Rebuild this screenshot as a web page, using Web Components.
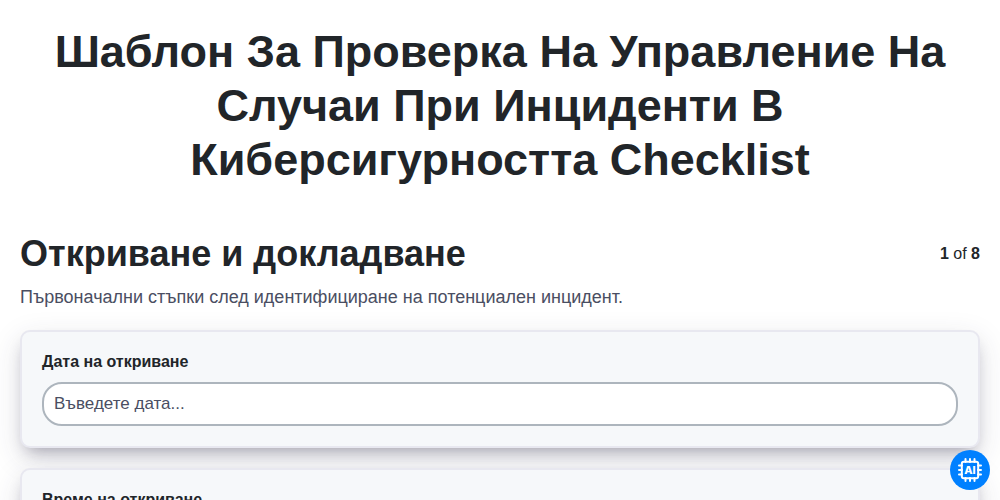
<!DOCTYPE html>
<html lang="bg">

<head>
  <meta charset="UTF-8">
  <meta name="viewport" content="width=device-width, initial-scale=1.0">
  <title>Checklist</title>
  <style>
    :root {
      --text-color: #212529;
      --muted-color: #4a4e62;
      --card-color: #f6f8fa;
      --card-border: #e8e8f0;
      --accent-color: #0080ff;
    }

    body {
      margin: 0;
      height: 500px;
      overflow: hidden;
      background: #fff;
      color: var(--text-color);
      font: 16px/1.5 "Liberation Sans", Arial, sans-serif;
    }
  </style>
</head>

<body>
  <checklist-page>
    <span slot="title">Шаблон За Проверка На Управление На Случаи При Инциденти В Киберсигурността Checklist</span>
    <checklist-section current="1" total="8">
      <span slot="heading">Откриване и докладване</span>
      <span slot="description">Първоначални стъпки след идентифициране на потенциален инцидент.</span>
      <checklist-field label="Дата на откриване" placeholder="Въведете дата..."></checklist-field>
      <checklist-field label="Време на откриване" placeholder=""></checklist-field>
    </checklist-section>
  </checklist-page>
  <ai-button></ai-button>

  <template id="page">
    <style>
      :host {
        display: block;
        padding: 25px 20px;
      }

      h1 {
        margin: 0 0 40px;
        font-size: 45px;
        line-height: 54px;
        text-align: center;
      }
    </style>
    <h1><slot name="title"></slot></h1>
    <slot></slot>
  </template>

  <template id="section">
    <style>
      :host {
        display: block;
      }

      header {
        display: flex;
        align-items: center;
        justify-content: space-between;
      }

      h2 {
        margin: 0;
        font-size: 36px;
        line-height: 54px;
      }

      p {
        margin: 3px 0 19px;
        font-size: 18px;
        line-height: 27px;
        color: var(--muted-color);
      }

      .fields {
        display: flex;
        flex-direction: column;
        gap: 20px;
      }
    </style>
    <header>
      <h2><slot name="heading"></slot></h2>
      <div><b class="current"></b> of <b class="total"></b></div>
    </header>
    <p><slot name="description"></slot></p>
    <div class="fields"><slot></slot></div>
  </template>

  <template id="field">
    <style>
      :host {
        display: block;
        box-sizing: border-box;
        height: 118px;
        padding: 18px 20px 20px;
        border: 2px solid var(--card-border);
        border-radius: 10px;
        background: var(--card-color);
        box-shadow: rgba(50, 50, 80, .15) 0 10px 30px 0, rgba(20, 15, 45, .34) 0 9px 16px -7px;
      }

      label {
        display: block;
        margin-bottom: 8px;
        font-weight: bold;
      }

      input {
        display: block;
        box-sizing: border-box;
        width: 100%;
        height: 44px;
        padding: 0 10px;
        border: 2px solid #adb5bd;
        border-radius: 20px;
        background: #fff;
        font: 17px "Liberation Sans", Arial, sans-serif;
      }

      input::placeholder {
        color: var(--muted-color);
      }
    </style>
    <label for="value"></label>
    <input id="value" type="text">
  </template>

  <template id="ai">
    <style>
      :host {
        position: fixed;
        right: 10px;
        bottom: 10px;
      }

      button {
        display: flex;
        align-items: center;
        justify-content: center;
        width: 40px;
        height: 40px;
        padding: 0;
        border: none;
        border-radius: 50%;
        background: var(--accent-color);
        color: #fff;
      }
    </style>
    <button aria-label="AI">
      <svg width="24" height="24" viewBox="0 0 24 24" fill="none" stroke="currentColor" stroke-width="2" stroke-linecap="round">
        <rect x="3.8" y="3.8" width="16.4" height="16.4" rx="2"/>
        <path d="M7.5 4V1M12 4V1M16.5 4V1M7.5 20v3M12 20v3M16.5 20v3M4 7.5H1M4 12H1M4 16.5H1M20 7.5h3M20 12h3M20 16.5h3"/>
        <text x="6.3" y="15.7" font-family="Inter, sans-serif" font-size="10" font-weight="800" textLength="11.4" lengthAdjust="spacingAndGlyphs" fill="currentColor" stroke="none">AI</text>
      </svg>
    </button>
  </template>

  <script>
    class TemplateElement extends HTMLElement {
      constructor(id) {
        super();
        const shadow = this.attachShadow({ mode: 'open' });
        shadow.appendChild(document.getElementById(id).content.cloneNode(true));
      }
    }

    class ChecklistPage extends TemplateElement {
      constructor() {
        super('page');
      }
    }

    class ChecklistSection extends TemplateElement {
      constructor() {
        super('section');
        this.shadowRoot.querySelector('.current').textContent = this.getAttribute('current');
        this.shadowRoot.querySelector('.total').textContent = this.getAttribute('total');
      }
    }

    class ChecklistField extends TemplateElement {
      constructor() {
        super('field');
        this.shadowRoot.querySelector('label').textContent = this.getAttribute('label');
        this.shadowRoot.querySelector('input').placeholder = this.getAttribute('placeholder');
      }
    }

    class AiButton extends TemplateElement {
      constructor() {
        super('ai');
      }
    }

    customElements.define('checklist-page', ChecklistPage)
    customElements.define('checklist-section', ChecklistSection)
    customElements.define('checklist-field', ChecklistField)
    customElements.define('ai-button', AiButton)
  </script>
</body>

</html>
